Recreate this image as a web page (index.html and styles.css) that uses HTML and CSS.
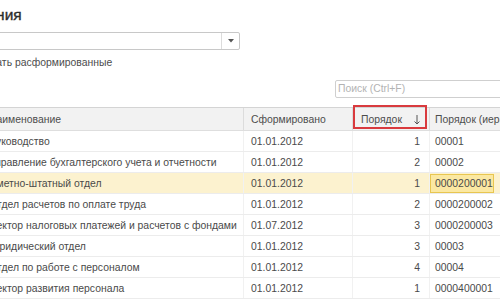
FILE: index.html
```html
<!DOCTYPE html>
<html lang="ru">
<head>
<meta charset="utf-8">
<link rel="stylesheet" href="styles.css">
</head>
<body>
<div class="page">
  <h1 class="title">Подразделения</h1>
  <div class="select">
    <span class="select-value"></span>
    <span class="select-btn"><svg width="6" height="4" viewBox="0 0 6 4"><path d="M0 0H6L3 3.5Z" fill="#555"/></svg></span>
  </div>
  <label class="check"><span class="checkbox"></span>Показывать расформированные</label>
  <div class="toolbar"><div class="search">Поиск (Ctrl+F)</div></div>
  <div class="grid">
    <div class="row head">
      <div class="cell c1">Наименование</div>
      <div class="cell c2">Сформировано</div>
      <div class="cell c3 sorted">Порядок<svg class="arrow" width="8" height="11" viewBox="0 0 8 11"><path d="M4 1V10M1.5 7.5L4 10L6.5 7.5" fill="none" stroke="#555" stroke-width="1"/></svg><span class="mark"></span></div>
      <div class="cell c4">Порядок (иерархия)</div>
    </div>
    <div class="row"><div class="cell c1">Руководство</div><div class="cell c2">01.01.2012</div><div class="cell c3 num">1</div><div class="cell c4">00001</div></div>
    <div class="row"><div class="cell c1">Управление бухгалтерского учета и отчетности</div><div class="cell c2">01.01.2012</div><div class="cell c3 num">2</div><div class="cell c4">00002</div></div>
    <div class="row sel"><div class="cell c1">Сметно-штатный отдел</div><div class="cell c2">01.01.2012</div><div class="cell c3 num">1</div><div class="cell c4"><span class="cur">0000200001</span></div></div>
    <div class="row"><div class="cell c1">Отдел расчетов по оплате труда</div><div class="cell c2">01.01.2012</div><div class="cell c3 num">2</div><div class="cell c4">0000200002</div></div>
    <div class="row"><div class="cell c1">Сектор налоговых платежей и расчетов с фондами</div><div class="cell c2">01.07.2012</div><div class="cell c3 num">3</div><div class="cell c4">0000200003</div></div>
    <div class="row"><div class="cell c1">Юридический отдел</div><div class="cell c2">01.01.2012</div><div class="cell c3 num">3</div><div class="cell c4">00003</div></div>
    <div class="row"><div class="cell c1">Отдел по работе с персоналом</div><div class="cell c2">01.01.2012</div><div class="cell c3 num">4</div><div class="cell c4">00004</div></div>
    <div class="row"><div class="cell c1">Сектор развития персонала</div><div class="cell c2">01.01.2012</div><div class="cell c3 num">1</div><div class="cell c4">0000400001</div></div>
  </div>
</div>
</body>
</html>
```
FILE: styles.css
```css
html, body {
  margin: 0;
  padding: 0;
  background: #fff;
  overflow: hidden;
}
body {
  width: 500px;
  height: 300px;
  font-family: "Liberation Sans", Arial, sans-serif;
  font-size: 10.4px;
  color: #4a4a4a;
}
.page {
  margin-left: -120px;
  width: 700px;
  padding-top: 6px;
}
.title {
  margin: 0 0 0 29px;
  font-size: 15.5px;
  line-height: 18px;
  font-weight: normal;
  color: #2b2b2b;
  -webkit-text-stroke: 0.35px #2b2b2b;
}
.select {
  margin: 8px 0 0 60px;
  width: 300px;
  height: 18px;
  box-sizing: border-box;
  border: 1px solid #c8c8c8;
  border-radius: 2px;
  display: flex;
}
.select-value { flex: 1; }
.select-btn {
  width: 17px;
  border-left: 1px solid #dcdcdc;
  display: flex;
  align-items: center;
  justify-content: center;
}
.check {
  margin: 6px 0 0 60px;
  height: 14px;
  line-height: 14px;
  display: flex;
  align-items: center;
  gap: 4px;
  color: #4d4d4d;
}
.checkbox {
  width: 11px;
  height: 11px;
  border: 1px solid #bbb;
  box-sizing: border-box;
}
.toolbar {
  margin-top: 10px;
  display: flex;
  padding-left: 455px;
}
.search {
  width: 200px;
  height: 18px;
  box-sizing: border-box;
  border: 1px solid #cfcfcf;
  border-radius: 2px;
  padding-left: 2px;
  line-height: 16px;
  color: #b3b3b3;
}
.grid {
  margin: 9px 0 0 100px;
  border-top: 1px solid #d4d4d4;
}
.row {
  display: flex;
  height: 21px;
  border-bottom: 1px solid #ececec;
  box-sizing: border-box;
}
.row.head {
  height: 23px;
  background: #f2f2f2;
  border-bottom: 1px solid #dedede;
}
.row.sel { background: #fcf2cf; }
.cell {
  flex: none;
  box-sizing: border-box;
  display: flex;
  align-items: center;
  white-space: nowrap;
  overflow: hidden;
  padding-left: 7px;
  border-right: 1px solid #f1f1f1;
}
.head .cell { border-right: 1px solid #dcdcdc; color: #4d4d4d; }
.c1 { width: 264px; padding-left: 9px; }
.c2 { width: 109px; }
.c3 { width: 77px; }
.c4 { width: 120px; padding-left: 5px; border-right: none; }
.num { justify-content: flex-end; padding-right: 9px; }
.sorted { position: relative; overflow: visible; padding-left: 8px; }
.arrow { margin-left: 11px; }
.mark {
  position: absolute;
  left: 0;
  top: -3px;
  width: 74px;
  height: 24px;
  box-sizing: border-box;
  border: 2px solid #d93a3e;
}
.sel .c4 { padding-left: 0; }
.cur {
  display: flex;
  align-items: center;
  width: 64px;
  height: 19px;
  box-sizing: border-box;
  padding-left: 4px;
  background: #fbe8a2;
  border: 1px solid #e8c650;
}
```
